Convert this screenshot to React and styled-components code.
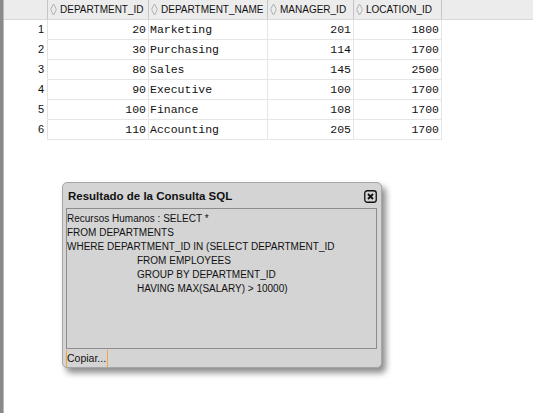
import React from "react";
import styled, { createGlobalStyle } from "styled-components";

const GlobalStyle = createGlobalStyle`
  html, body {
    margin: 0;
    padding: 0;
    background: #fff;
  }
`;

const Page = styled.div`
  display: flex;
  width: 533px;
  height: 413px;
  overflow: hidden;
  font-family: "Liberation Sans", Arial, sans-serif;
`;

const LeftBar = styled.div`
  width: 3px;
  flex: none;
  background: #8a8a8a;
  border-right: 1px solid #b8b8b8;
`;

const Content = styled.div`
  flex: 1;
  display: flex;
  flex-direction: column;
`;

const HeaderRow = styled.div`
  display: flex;
  height: 20px;
  background: #ececec;
  border-bottom: 1px solid #d8d8d8;
  box-sizing: border-box;
`;

const HeadCell = styled.div`
  width: ${(p) => p.w}px;
  flex: none;
  display: flex;
  align-items: center;
  gap: 3px;
  padding-left: 2px;
  box-sizing: border-box;
  border-right: ${(p) => (p.corner ? "1px solid #c4c4c4" : "1px solid #c4c4c4")};
  font-size: 10px;
  color: #111;
  white-space: nowrap;
`;

const Row = styled.div`
  display: flex;
  height: 20px;
  box-sizing: border-box;
`;

const NumCell = styled.div`
  width: 44px;
  flex: none;
  box-sizing: border-box;
  text-align: right;
  padding-right: 3px;
  font-size: 11px;
  line-height: 19px;
  color: #111;
  border-right: 1px solid #e2e2e2;
  border-bottom: 1px solid #ffffff;
`;

const Cell = styled.div`
  width: ${(p) => p.w}px;
  flex: none;
  box-sizing: border-box;
  text-align: ${(p) => (p.right ? "right" : "left")};
  padding: ${(p) => (p.right ? "0 2px 0 0" : "0 0 0 1px")};
  font-family: "Liberation Mono", "Courier New", monospace;
  font-size: 11.5px;
  line-height: 19px;
  color: #111;
  border-right: 1px solid #e6e6e6;
  border-bottom: 1px solid #e6e6e6;
  white-space: nowrap;
`;

const DialogArea = styled.div`
  padding: 42px 0 0 58px;
`;

const Dialog = styled.div`
  width: 320px;
  height: 186px;
  box-sizing: border-box;
  background: #d4d4d4;
  border: 1px solid #a6a6a6;
  border-radius: 5px;
  box-shadow: 4px 5px 6px rgba(0, 0, 0, 0.45);
  display: flex;
  flex-direction: column;
  padding: 0 4px 0 3px;
`;

const TitleBar = styled.div`
  height: 25px;
  display: flex;
  align-items: center;
  justify-content: space-between;
  padding: 0 0 0 2px;
`;

const Title = styled.div`
  font-weight: bold;
  font-size: 11.5px;
  color: #111;
`;

const CloseBtn = styled.div`
  width: 13px;
  height: 13px;
  margin-top: 1px;
  display: flex;
  align-items: center;
  justify-content: center;
`;

const QueryBox = styled.div`
  height: 141px;
  box-sizing: border-box;
  border: 1px solid #8c8c8c;
  padding: 3px 0 0 0;
  font-size: 10px;
  line-height: 14px;
  color: #111;
  white-space: pre;
`;

const Indent = styled.div`
  padding-left: ${(p) => (p.indent ? 70 : 0)}px;
`;

const Footer = styled.div`
  display: flex;
  padding-top: 1px;
`;

const CopyButton = styled.div`
  height: 17px;
  line-height: 17px;
  font-size: 10.5px;
  color: #111;
  padding: 0 1px 0 0;
  border-left: 1px solid #f0a640;
  border-right: 1px solid #f0a640;
`;

const SortIcon = () => (
  <svg width="7" height="13" viewBox="0 0 7 13">
    <path
      d="M1 5.5 L3.5 1 L6 5.5 M1 7.5 L3.5 12 L6 7.5 M1 5.5 L1 7.5 M6 5.5 L6 7.5"
      fill="none"
      stroke="#b0b0b0"
      strokeWidth="1"
    />
  </svg>
);

const columns = [
  { name: "DEPARTMENT_ID", w: 101 },
  { name: "DEPARTMENT_NAME", w: 119 },
  { name: "MANAGER_ID", w: 86 },
  { name: "LOCATION_ID", w: 88 },
];

const rows = [
  [20, "Marketing", 201, 1800],
  [30, "Purchasing", 114, 1700],
  [80, "Sales", 145, 2500],
  [90, "Executive", 100, 1700],
  [100, "Finance", 108, 1700],
  [110, "Accounting", 205, 1700],
];

const query = [
  ["Recursos Humanos : SELECT *", false],
  ["FROM DEPARTMENTS", false],
  ["WHERE DEPARTMENT_ID IN (SELECT DEPARTMENT_ID", false],
  ["FROM EMPLOYEES", true],
  ["GROUP BY DEPARTMENT_ID", true],
  ["HAVING MAX(SALARY) > 10000)", true],
];

const App = () => {
  return (
    <Page>
      <GlobalStyle />
      <LeftBar />
      <Content>
        <HeaderRow>
          <HeadCell w={44} />
          {columns.map((c) => (
            <HeadCell key={c.name} w={c.w}>
              <SortIcon />
              {c.name}
            </HeadCell>
          ))}
        </HeaderRow>
        {rows.map((r, i) => (
          <Row key={i}>
            <NumCell>{i + 1}</NumCell>
            <Cell w={101} right>
              {r[0]}
            </Cell>
            <Cell w={119}>{r[1]}</Cell>
            <Cell w={86} right>
              {r[2]}
            </Cell>
            <Cell w={88} right>
              {r[3]}
            </Cell>
          </Row>
        ))}
        <DialogArea>
          <Dialog>
            <TitleBar>
              <Title>Resultado de la Consulta SQL</Title>
              <CloseBtn>
                <svg width="13" height="13" viewBox="0 0 13 13">
                  <rect
                    x="0.75"
                    y="0.75"
                    width="11.5"
                    height="11.5"
                    rx="2.5"
                    fill="none"
                    stroke="#111"
                    strokeWidth="1.3"
                  />
                  <path
                    d="M4 4 L9 9 M9 4 L4 9"
                    stroke="#111"
                    strokeWidth="1.8"
                  />
                </svg>
              </CloseBtn>
            </TitleBar>
            <QueryBox>
              {query.map(([t, ind], i) => (
                <Indent key={i} indent={ind}>
                  {t}
                </Indent>
              ))}
            </QueryBox>
            <Footer>
              <CopyButton>Copiar...</CopyButton>
            </Footer>
          </Dialog>
        </DialogArea>
      </Content>
    </Page>
  );
};

export default App;
